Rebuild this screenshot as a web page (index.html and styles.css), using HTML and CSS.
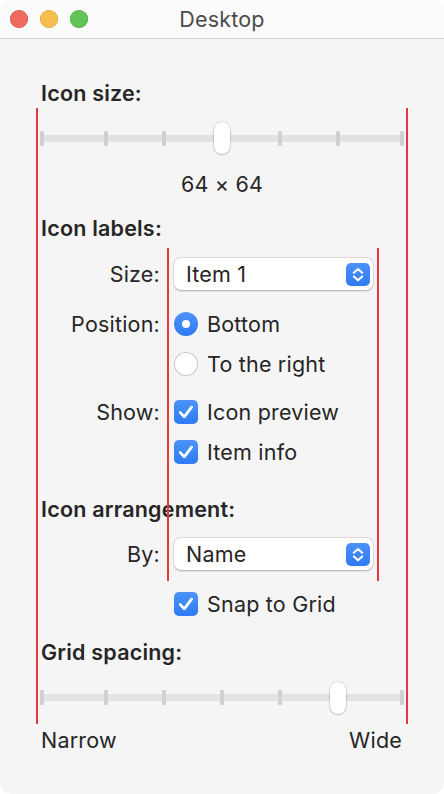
FILE: index.html
```html
<!DOCTYPE html>
<html lang="en">
<head>
<meta charset="utf-8">
<title>Desktop</title>
<link rel="stylesheet" href="styles.css">
</head>
<body>
<div class="window">
  <header class="titlebar">
    <div class="lights">
      <span class="light red"></span>
      <span class="light yellow"></span>
      <span class="light green"></span>
    </div>
    <div class="title">Desktop</div>
    <div></div>
  </header>
  <main class="content">
    <div class="heading top-heading">Icon size:</div>
    <div class="guide">
      <div class="slider">
        <div class="track">
          <span class="tick"></span><span class="tick"></span><span class="tick"></span><span class="tick"></span><span class="tick"></span><span class="tick"></span><span class="tick"></span>
        </div>
        <div class="thumb" style="left:174px"></div>
      </div>
      <div class="size-value">64 × 64</div>
      <div class="heading in-guide">Icon labels:</div>
      <div class="form">
        <div class="row r-size">
          <div class="lbl">Size:</div>
          <div class="popup"><span>Item 1</span>
            <svg class="stepper" width="24" height="23" viewBox="0 0 24 23"><rect width="24" height="23" rx="5" fill="url(#g1)"/><defs><linearGradient id="g1" x1="0" y1="0" x2="0" y2="1"><stop offset="0" stop-color="#4d93f8"/><stop offset="1" stop-color="#2e7af4"/></linearGradient></defs><path d="M7.8 9.8 L12 5.9 L16.2 9.8" fill="none" stroke="#fff" stroke-width="2" stroke-linecap="round" stroke-linejoin="round"/><path d="M7.8 13.4 L12 17.3 L16.2 13.4" fill="none" stroke="#fff" stroke-width="2" stroke-linecap="round" stroke-linejoin="round"/></svg>
          </div>
        </div>
        <div class="row r-opt first-opt">
          <div class="lbl">Position:</div>
          <div class="option"><span class="radio on"></span>Bottom</div>
        </div>
        <div class="row r-opt">
          <div class="lbl"></div>
          <div class="option"><span class="radio"></span>To the right</div>
        </div>
        <div class="row r-opt group-start">
          <div class="lbl">Show:</div>
          <div class="option"><span class="check"><svg width="24" height="24" viewBox="0 0 24 24"><path d="M6.3 12.6 L10.2 16.8 L17.6 7.2" fill="none" stroke="#fff" stroke-width="2.8" stroke-linecap="round" stroke-linejoin="round"/></svg></span>Icon preview</div>
        </div>
        <div class="row r-opt">
          <div class="lbl"></div>
          <div class="option"><span class="check"><svg width="24" height="24" viewBox="0 0 24 24"><path d="M6.3 12.6 L10.2 16.8 L17.6 7.2" fill="none" stroke="#fff" stroke-width="2.8" stroke-linecap="round" stroke-linejoin="round"/></svg></span>Item info</div>
        </div>
        <div class="heading in-form">Icon arrangement:</div>
        <div class="row r-by">
          <div class="lbl">By:</div>
          <div class="popup"><span>Name</span>
            <svg class="stepper" width="24" height="23" viewBox="0 0 24 23"><rect width="24" height="23" rx="5" fill="url(#g2)"/><defs><linearGradient id="g2" x1="0" y1="0" x2="0" y2="1"><stop offset="0" stop-color="#4d93f8"/><stop offset="1" stop-color="#2e7af4"/></linearGradient></defs><path d="M7.8 9.8 L12 5.9 L16.2 9.8" fill="none" stroke="#fff" stroke-width="2" stroke-linecap="round" stroke-linejoin="round"/><path d="M7.8 13.4 L12 17.3 L16.2 13.4" fill="none" stroke="#fff" stroke-width="2" stroke-linecap="round" stroke-linejoin="round"/></svg>
          </div>
        </div>
      </div>
      <div class="snap">
        <div class="option"><span class="check"><svg width="24" height="24" viewBox="0 0 24 24"><path d="M6.3 12.6 L10.2 16.8 L17.6 7.2" fill="none" stroke="#fff" stroke-width="2.8" stroke-linecap="round" stroke-linejoin="round"/></svg></span>Snap to Grid</div>
      </div>
      <div class="heading in-guide grid-heading">Grid spacing:</div>
      <div class="slider slider-2">
        <div class="track">
          <span class="tick"></span><span class="tick"></span><span class="tick"></span><span class="tick"></span><span class="tick"></span><span class="tick"></span><span class="tick"></span>
        </div>
        <div class="thumb" style="left:290px"></div>
      </div>
    </div>
    <div class="range-labels"><span>Narrow</span><span>Wide</span></div>
  </main>
</div>
</body>
</html>
```
FILE: styles.css
```css
*, *::before, *::after { box-sizing: border-box; margin: 0; padding: 0; }
html, body { background: #ffffff; }
body {
  font-family: Inter, "Noto Sans", "Liberation Sans", sans-serif;
  font-size: 21.5px;
  letter-spacing: 0.2px;
  line-height: 24px;
  color: #262626;
}
.window {
  width: 444px;
  height: 794px;
  border-radius: 12px;
  overflow: hidden;
  background: #f5f5f5;
}
.titlebar {
  height: 39px;
  display: grid;
  grid-template-columns: 1fr auto 1fr;
  align-items: center;
  background: #fbfbfb;
  border-bottom: 1px solid #d6d6d6;
}
.lights { display: flex; gap: 12px; padding-left: 10px; }
.light { width: 18px; height: 18px; border-radius: 50%; }
.light.red { background: #ee6a5f; box-shadow: inset 0 0 0 0.5px #d3574c; }
.light.yellow { background: #f5be4f; box-shadow: inset 0 0 0 0.5px #d9a23b; }
.light.green { background: #61c455; box-shadow: inset 0 0 0 0.5px #4faa43; }
.title { color: #4b4b4b; }

.content { padding-top: 42px; }
.heading { font-weight: 600; }
.top-heading { padding-left: 41px; }
.guide {
  margin: 3px 0 0 36px;
  width: 372px;
  border-left: 2px solid #e5383f;
  border-right: 2px solid #e5383f;
  padding: 14px 0 10px;
}
.slider {
  position: relative;
  height: 32px;
  margin: 0 2px;
  display: flex;
  align-items: center;
}
.track {
  width: 100%;
  height: 7px;
  background: #e3e3e3;
  border-radius: 1px;
  display: flex;
  align-items: center;
  gap: 54px;
}
.tick {
  flex: none;
  width: 4px;
  height: 15px;
  background: #d1d1d1;
  border-radius: 1px;
}
.tick:first-child { margin-right: 6px; }
.tick:last-child { margin-left: 6px; }
.thumb {
  position: absolute;
  top: 0;
  width: 16px;
  height: 32px;
  border-radius: 8px;
  background: #ffffff;
  box-shadow: 0 0.5px 2px rgba(0, 0, 0, 0.3), 0 0 0 0.5px rgba(0, 0, 0, 0.08);
}
.size-value { text-align: center; margin-top: 18px; }
.in-guide { margin-top: 20px; padding-left: 3px; }

.form { position: relative; margin-top: 8px; padding-bottom: 10.7px; }
.form::before {
  content: "";
  position: absolute;
  top: 0;
  bottom: 0;
  left: 129px;
  width: 212px;
  border-left: 2px solid #e5383f;
  border-right: 2px solid #e5383f;
  z-index: 1;
  pointer-events: none;
}
.row {
  display: grid;
  grid-template-columns: 122px 1fr;
  column-gap: 14px;
  align-items: center;
}
.lbl { text-align: right; }
.r-size { height: 52px; }
.r-opt { height: 40px; }
.first-opt { margin-top: 4px; }
.group-start { margin-top: 8px; }
.in-form { margin-top: 25px; padding-left: 3px; }
.r-by { margin-top: 17px; height: 32px; }

.popup {
  width: 199px;
  height: 32px;
  display: flex;
  align-items: center;
  justify-content: space-between;
  padding: 0 3px 0 12px;
  background: #ffffff;
  border-radius: 7px;
  box-shadow: 0 0.5px 2px rgba(0, 0, 0, 0.28), 0 0 0 0.5px rgba(0, 0, 0, 0.06);
}
.stepper { display: block; }

.option { display: flex; align-items: center; gap: 9px; }
.radio {
  flex: none;
  width: 24px;
  height: 24px;
  border-radius: 50%;
  background: #ffffff;
  box-shadow: inset 0 0 0 1px #c9c9c9, 0 0.5px 1px rgba(0, 0, 0, 0.08);
  display: flex;
  align-items: center;
  justify-content: center;
}
.radio.on {
  background: linear-gradient(#4d93f8, #2e7af4);
  box-shadow: none;
}
.radio.on::after {
  content: "";
  width: 8px;
  height: 8px;
  border-radius: 50%;
  background: #ffffff;
}
.check {
  flex: none;
  width: 24px;
  height: 24px;
  border-radius: 5px;
  background: linear-gradient(#4d93f8, #2e7af4);
}
.check svg { display: block; }

.snap { margin-top: 11.3px; padding-left: 136px; }
.grid-heading { margin-top: 24px; }
.slider-2 { margin-top: 18px; }
.range-labels {
  display: flex;
  justify-content: space-between;
  margin-top: 4px;
  padding: 0 42px 0 41px;
}
```
